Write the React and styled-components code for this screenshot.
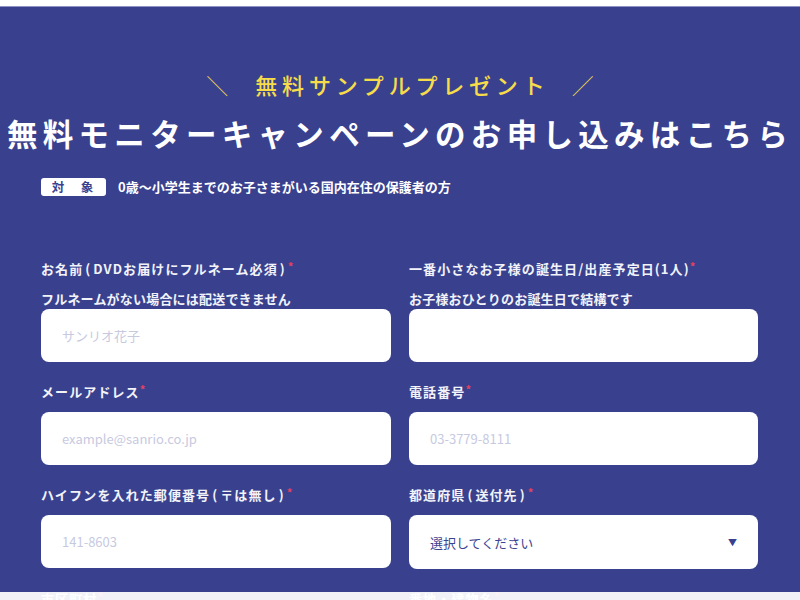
import React from "react"
import styled, { createGlobalStyle } from "styled-components"

const GlobalStyle = createGlobalStyle`
  html, body {
    margin: 0;
    padding: 0;
    background: #ffffff;
    font-family: "Noto Sans CJK JP", "Noto Sans", sans-serif;
  }
  * {
    box-sizing: border-box;
  }
`

const Section = styled.section`
  margin-top: 6px;
  border-top: 1px solid #8d93c2;
  background: #39418f;
  padding: 61px 0 40px;
  color: #ffffff;
`

const Lead = styled.div`
  display: flex;
  justify-content: center;
  align-items: center;
  gap: 27px;
  color: #f7dc4a;
  font-size: 22px;
  font-weight: 500;
  line-height: 33px;
`

const LeadText = styled.span`
  letter-spacing: 4.8px;
  margin-right: -4.8px;
`

const Slash = styled.span`
  font-weight: 300;
  font-size: 22px;
`

const Title = styled.h1`
  margin: 10px 0 0;
  text-align: center;
  font-size: 30.5px;
  font-weight: 700;
  line-height: 44px;
  letter-spacing: 5.3px;
  white-space: nowrap;
`

const Container = styled.div`
  width: 717px;
  margin: 0 0 0 41px;
`

const Target = styled.div`
  display: flex;
  align-items: center;
  gap: 12px;
  margin-top: 22px;
  font-size: 13px;
  font-weight: 700;
`

const Badge = styled.span`
  display: inline-flex;
  justify-content: center;
  align-items: center;
  width: 65px;
  height: 18px;
  border-radius: 3px;
  background: #ffffff;
  color: #39418f;
  font-size: 12.5px;
  letter-spacing: 2px;
`

const Form = styled.form`
  display: grid;
  grid-template-columns: 350px 349px;
  column-gap: 18px;
  row-gap: 20px;
  margin-top: 63px;
`

const Field = styled.div`
  display: flex;
  flex-direction: column;
`

const Label = styled.label`
  font-size: 13px;
  font-weight: 700;
  line-height: 20px;
  letter-spacing: 1.1px;
  color: #f2f3f8;
  margin-bottom: 10px;
  white-space: nowrap;
`

const Paren = styled.span`
  margin: 0 2px;
`

const Req = styled.span`
  color: #e8405f;
  font-size: 11px;
  position: relative;
  top: -3px;
`

const Sub = styled.div`
  font-size: 13px;
  font-weight: 700;
  line-height: 20px;
  letter-spacing: 0.2px;
  color: #f2f3f8;
`

const Input = styled.input`
  height: 53px;
  border: none;
  border-radius: 8px;
  background: #ffffff;
  padding: 0 21px;
  font-family: inherit;
  font-size: 13px;
  color: #39418f;
  outline: none;
  &::placeholder {
    color: #c7cadf;
  }
`

const Select = styled.div`
  height: 54px;
  border-radius: 8px;
  background: #ffffff;
  padding: 0 21px;
  display: flex;
  align-items: center;
  justify-content: space-between;
  font-size: 13px;
  color: #3b4392;
`

const Arrow = styled.span`
  font-size: 9px;
  color: #39418f;
`

const BottomBar = styled.div`
  position: fixed;
  left: 0;
  right: 0;
  bottom: 0;
  height: 8px;
  background: rgba(255, 255, 255, 0.93);
`

const Required = () => <Req>*</Req>

export default function App() {
  return (
    <>
      <GlobalStyle />
      <Section>
        <Lead>
          <Slash>＼</Slash>
          <LeadText>無料サンプルプレゼント</LeadText>
          <Slash>／</Slash>
        </Lead>
        <Title>無料モニターキャンペーンのお申し込みはこちら</Title>
        <Container>
          <Target>
            <Badge>対　象</Badge>
            <span>0歳〜小学生までのお子さまがいる国内在住の保護者の方</span>
          </Target>
          <Form onSubmit={(e) => e.preventDefault()}>
            <Field>
              <Label>
                お名前<Paren>(</Paren>DVDお届けにフルネーム必須<Paren>)</Paren>
                <Required />
              </Label>
              <Sub>フルネームがない場合には配送できません</Sub>
              <Input placeholder="サンリオ花子" />
            </Field>
            <Field>
              <Label>一番小さなお子様の誕生日/出産予定日(1人)<Required /></Label>
              <Sub>お子様おひとりのお誕生日で結構です</Sub>
              <Input />
            </Field>
            <Field>
              <Label>メールアドレス<Required /></Label>
              <Input placeholder="example@sanrio.co.jp" />
            </Field>
            <Field>
              <Label>電話番号<Required /></Label>
              <Input placeholder="03-3779-8111" />
            </Field>
            <Field>
              <Label>
                ハイフンを入れた郵便番号<Paren>(</Paren>〒は無し<Paren>)</Paren>
                <Required />
              </Label>
              <Input placeholder="141-8603" />
            </Field>
            <Field>
              <Label>
                都道府県<Paren>(</Paren>送付先<Paren>)</Paren>
                <Required />
              </Label>
              <Select>
                <span>選択してください</span>
                <Arrow>▼</Arrow>
              </Select>
            </Field>
            <Field>
              <Label>市区町村<Required /></Label>
              <Input />
            </Field>
            <Field>
              <Label>番地・建物名<Required /></Label>
              <Input />
            </Field>
          </Form>
        </Container>
      </Section>
      <BottomBar />
    </>
  )
}
